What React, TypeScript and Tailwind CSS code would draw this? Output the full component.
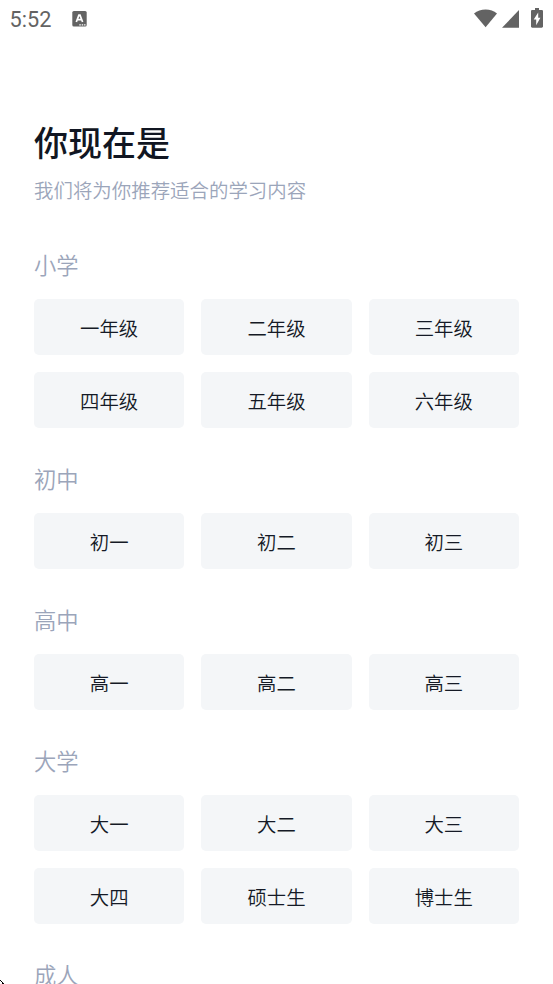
import React from 'react';

interface GradeGroup {
  title: string;
  options: string[];
}

const groups: GradeGroup[] = [
  { title: '小学', options: ['一年级', '二年级', '三年级', '四年级', '五年级', '六年级'] },
  { title: '初中', options: ['初一', '初二', '初三'] },
  { title: '高中', options: ['高一', '高二', '高三'] },
  { title: '大学', options: ['大一', '大二', '大三', '大四', '硕士生', '博士生'] },
  { title: '成人', options: [] },
];

const StatusBar: React.FC = () => (
  <header className="flex h-[38px] shrink-0 items-center justify-between pl-[9.5px] pr-[10px] text-[#636363]">
    <div className="flex items-center">
      <span className="w-[62.5px] pt-px font-['Roboto',sans-serif] text-[21.7px] leading-[37px]">5:52</span>
      <svg className="h-[17px] w-[15px]" viewBox="0 0 15 17" fill="currentColor">
        <rect x="0.3" y="0" width="14.4" height="15.6" rx="1.6" />
        <path
          d="M4.3 11 6.9 4.2H8L10.600 11M5.3 8.700h4.2"
          fill="none"
          stroke="#fff"
          strokeWidth="1.7"
        />
        <path d="M7.3 13.200h1.500v1.200H7.300zM9.700 13.200h1.500v1.200H9.700zM12.100 13.200h1.400v1.200h-1.400z" fill="#fff" />
      </svg>
    </div>
    <div className="flex items-center pb-[2px]">
      <svg className="mr-[5px] h-[19px] w-[23px]" viewBox="0 0 23 19" fill="currentColor">
        <path d="M11.600 18.300 0 4.400C3.200 1.800 7.200.4 11.600.4S19.900 1.800 23 4.400z" />
      </svg>
      <svg className="mr-[12px] h-[19px] w-[17px]" viewBox="0 0 17 19" fill="currentColor">
        <path d="M0 18.800 17 1.100V18.800z" />
      </svg>
      <svg className="h-[20px] w-[12px]" viewBox="0 0 12 20" fill="currentColor">
        <path d="M4 0h4v2h2.700c.7 0 1.300.5 1.300 1.200v15.300c0 .7-.6 1.200-1.300 1.200H1.300C.6 19.700 0 19.200 0 18.500V3.200C0 2.500.6 2 1.300 2H4z" />
        <path d="M7.200 4.600 2.700 11.500h2.500v5.700l4.200-7.500H7.200z" fill="#fff" />
      </svg>
    </div>
  </header>
);

const GradeSection: React.FC<GradeGroup> = ({ title, options }) => (
  <section className="mb-[34px]">
    <h2 className="mb-[19px] text-[22.3px] font-[350] leading-[32px] text-[#9ba5ba]">{title}</h2>
    <div className="grid grid-cols-3 gap-[17px]">
      {options.map((option) => (
        <button
          key={option}
          type="button"
          className="h-[56px] rounded-[5px] bg-[#f4f6f8] pt-[2px] text-[19.4px] font-[350] leading-[28px] text-[#151a26]"
        >
          {option}
        </button>
      ))}
    </div>
  </section>
);

export default function App() {
  return (
    <div className="relative flex h-[984px] w-full flex-col overflow-hidden bg-white font-['Noto_Sans_CJK_SC',sans-serif]">
      <StatusBar />
      <main className="px-[34px] pt-[84px]">
        <h1 className="text-[34px] font-medium leading-[40px] text-[#111622]">你现在是</h1>
        <p className="mb-[44px] mt-[14px] text-[19.45px] font-[350] leading-[28px] text-[#9ba5ba]">
          我们将为你推荐适合的学习内容
        </p>
        {groups.map((group) => (
          <GradeSection key={group.title} {...group} />
        ))}
      </main>
      {/* Tip of the mouse pointer at the screen edge */}
      <svg className="absolute bottom-0 left-0 h-[4px] w-[4px]" viewBox="0 0 4 4" shapeRendering="crispEdges">
        <path d="M0 0h1v1H0zM1 1h1v1H1zM2 2h1v1H2zM2 3h2v1H2z" fill="#000" />
      </svg>
    </div>
  );
}
